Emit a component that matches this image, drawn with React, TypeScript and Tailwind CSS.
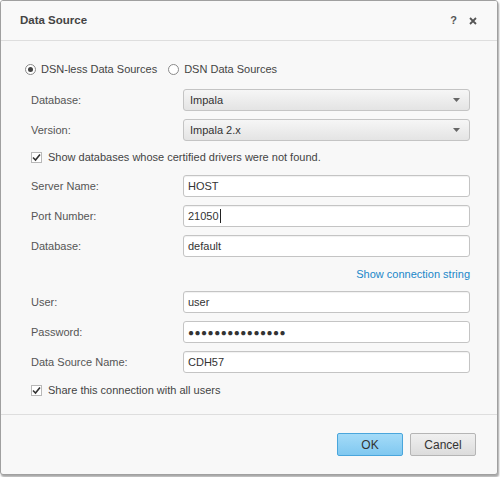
import React from 'react';

const font = { fontFamily: '"Liberation Sans", Arial, sans-serif' };

function Radio({ checked, label }: { checked?: boolean; label: string }) {
  return (
    <label className="flex items-center gap-[5px] text-[11px] text-[#444]">
      <span className="w-[11px] h-[11px] rounded-full border border-[#8a8a8a] bg-white flex items-center justify-center">
        {checked && <span className="w-[5px] h-[5px] rounded-full bg-[#444]" />}
      </span>
      {label}
    </label>
  );
}

function Check({ label }: { label: string }) {
  return (
    <div className="h-[20px] flex items-center gap-[6px] pl-[30px] text-[11px] text-[#444]">
      <span className="w-[11px] h-[11px] border border-[#b8b8b8] bg-white flex items-center justify-center">
        <svg width="9" height="9" viewBox="0 0 9 9">
          <path d="M1 4.5 L3.5 7 L8 1.5" stroke="#333" strokeWidth="1.6" fill="none" />
        </svg>
      </span>
      {label}
    </div>
  );
}

function Row({ label, children, mt }: { label: string; children: React.ReactNode; mt: string }) {
  return (
    <div className={`flex items-center h-[22px] ${mt}`}>
      <div className="w-[182px] pl-[30px] text-[11px] text-[#555]">{label}</div>
      <div className="w-[287px] h-full">{children}</div>
    </div>
  );
}

function Select({ value }: { value: string }) {
  return (
    <div className="h-full flex items-center justify-between px-[6px] rounded-[3px] border border-[#c4c4c4] bg-gradient-to-b from-[#f6f6f6] to-[#e4e4e4] text-[11px] text-[#333]">
      <span>{value}</span>
      <svg width="7" height="4" viewBox="0 0 7 4" className="mr-[3px]">
        <path d="M0 0 L7 0 L3.5 4 Z" fill="#666" />
      </svg>
    </div>
  );
}

function Input({ value, caret }: { value: string; caret?: boolean }) {
  return (
    <div className="h-full flex items-center px-[4px] rounded-[3px] border border-[#c4c4c4] bg-white shadow-[inset_0_1px_1px_rgba(0,0,0,0.06)] text-[11px] text-[#333]">
      <span>{value}</span>
      {caret && <span className="w-px h-[14px] bg-[#222] ml-px" />}
    </div>
  );
}

export default function App() {
  return (
    <div className="w-[500px] h-[477px] bg-white" style={font}>
      <div className="w-[498px] h-[475px] flex flex-col border border-[#a0a0a0] rounded-[3px] bg-[#f8f8f8] shadow-[1px_2px_2px_rgba(0,0,0,0.35)] overflow-hidden">
        <div className="h-[40px] shrink-0 flex items-center justify-between pl-[19px] pr-[20px] border-b border-[#dedede] bg-[#f9f9f9]">
          <span className="text-[11.5px] font-bold text-[#444]">Data Source</span>
          <div className="flex items-center gap-[12px] text-[#555]">
            <span className="text-[11px] font-bold">?</span>
            <svg width="8" height="8" viewBox="0 0 8 8">
              <path d="M1 1 L7 7 M7 1 L1 7" stroke="#555" strokeWidth="1.8" />
            </svg>
          </div>
        </div>

        <div className="flex-1 pt-[18px]">
          <div className="h-[20px] flex items-center gap-[11px] pl-[24px]">
            <Radio checked label="DSN-less Data Sources" />
            <Radio label="DSN Data Sources" />
          </div>
          <Row label="Database:" mt="mt-[10px]"><Select value="Impala" /></Row>
          <Row label="Version:" mt="mt-[8px]"><Select value="Impala 2.x" /></Row>
          <div className="mt-[6px]"><Check label="Show databases whose certified drivers were not found." /></div>
          <Row label="Server Name:" mt="mt-[8px]"><Input value="HOST" /></Row>
          <Row label="Port Number:" mt="mt-[8px]"><Input value="21050" caret /></Row>
          <Row label="Database:" mt="mt-[8px]"><Input value="default" /></Row>
          <div className="h-[20px] mt-[7px] w-[469px] flex items-center justify-end text-[11px] text-[#1a87c9]">
            Show connection string
          </div>
          <Row label="User:" mt="mt-[7px]"><Input value="user" /></Row>
          <Row label="Password:" mt="mt-[8px]">
            <div className="h-full flex items-center px-[4px] rounded-[3px] border border-[#c4c4c4] bg-white text-[#333] text-[10px] tracking-[0.5px]">
              {'●●●●●●●●●●●●●●●'}
            </div>
          </Row>
          <Row label="Data Source Name:" mt="mt-[8px]"><Input value="CDH57" /></Row>
          <div className="mt-[7px]"><Check label="Share this connection with all users" /></div>
        </div>

        <div className="h-[60px] shrink-0 border-t border-[#dedede] flex items-start justify-end gap-[7px] pt-[18px] pr-[21px]">
          <button className="w-[66px] h-[23px] rounded-[2px] border border-[#4aa6dc] bg-gradient-to-b from-[#a4dbf8] to-[#80c8f0] text-[12px] text-[#333]">
            OK
          </button>
          <button className="w-[66px] h-[23px] rounded-[2px] border border-[#b5b5b5] bg-gradient-to-b from-[#f0f0f0] to-[#dcdcdc] text-[12px] text-[#333]">
            Cancel
          </button>
        </div>
      </div>
    </div>
  );
}
